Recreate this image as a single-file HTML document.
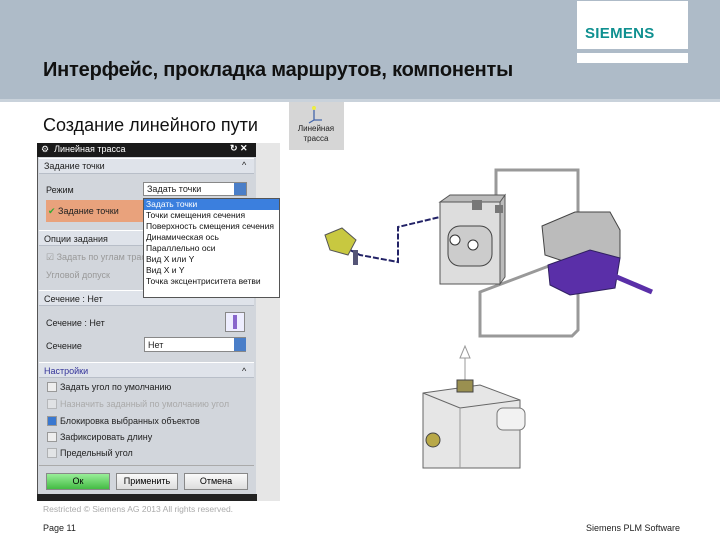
<!DOCTYPE html>
<html><head><meta charset="utf-8"><style>
*{margin:0;padding:0;box-sizing:border-box}
body{width:720px;height:540px;background:#fff;position:relative;overflow:hidden;font-family:"Liberation Sans","Noto Sans CJK SC",sans-serif}
.a{position:absolute}
.s{font-size:9px;color:#222;white-space:nowrap}
.sec{background:#dfe3ea;border-top:1px solid #fff;border-bottom:1px solid #b8bec8}
.cb{width:10px;height:10px;border:1px solid #999;background:#eee}
.btn{border:1px solid #888;background:linear-gradient(#fafafa,#ddd);font-size:9px;text-align:center;line-height:14px}
</style></head><body>
<div class="a" style="left:0;top:0;width:720px;height:99px;background:#aebbc8"></div>
<div class="a" style="left:0;top:99px;width:720px;height:3px;background:#c9d2db"></div>
<div class="a" style="left:577px;top:1px;width:111px;height:62px;background:#fff"></div>
<div class="a" style="left:577px;top:49px;width:111px;height:4px;background:#aebbc8"></div>
<div class="a" style="left:585px;top:25px;font-size:15px;font-weight:bold;color:#0f9090;letter-spacing:0.3px">SIEMENS</div>
<div class="a" style="left:43px;top:59px;font-size:20px;font-weight:bold;color:#111;letter-spacing:-0.2px">Интерфейс, прокладка маршрутов, компоненты</div>
<div class="a" style="left:43px;top:115px;font-size:18px;color:#111">Создание линейного пути</div>
<div class="a" style="left:289px;top:102px;width:55px;height:48px;background:#d6d6d6"></div>
<div class="a" style="left:292px;top:124px;font-size:8px;color:#222;text-align:center;width:48px;line-height:10px">Линейная трасса</div>
<svg class="a" style="left:305px;top:104px" width="20" height="20"><path d="M9 2v14h8M9 16l-5 3" stroke="#46a" stroke-width="1.3" fill="none"/><circle cx="9" cy="4" r="2" fill="#ee4"/></svg>

<!-- dialog -->
<div class="a" style="left:37px;top:143px;width:220px;height:358px;background:#d2d6dc;border:1px solid #555"></div>
<div class="a" style="left:37px;top:143px;width:220px;height:14px;background:#1a1a1a"></div>
<div class="a s" style="left:41px;top:144px;color:#fff">⚙ &nbsp;Линейная трасса</div>
<div class="a s" style="left:230px;top:143px;color:#fff;font-weight:bold">↻ ✕</div>
<div class="a" style="left:256px;top:143px;width:24px;height:358px;background:#e6e6e6"></div>
<div class="a sec" style="left:39px;top:158px;width:215px;height:16px"></div><div class="a s" style="left:44px;top:161px">Задание точки</div><div class="a s" style="left:242px;top:160px">^</div>
<div class="a s" style="left:46px;top:185px">Режим</div>
<div class="a" style="left:143px;top:182px;width:104px;height:14px;background:#fff;border:1px solid #888"></div><div class="a s" style="left:147px;top:184px">Задать точки</div>
<div class="a" style="left:234px;top:183px;width:12px;height:12px;background:#4a7ec8"></div>
<div class="a" style="left:46px;top:200px;width:100px;height:22px;background:#e9a27c"></div>
<div class="a s" style="left:48px;top:206px"><span style="color:#3a3">✔</span> Задание точки</div>
<div class="a sec" style="left:39px;top:230px;width:215px;height:16px"></div><div class="a s" style="left:44px;top:234px">Опции задания</div>
<div class="a s" style="left:46px;top:252px;color:#999">☑ Задать по углам трассы</div>
<div class="a s" style="left:46px;top:270px;color:#999">Угловой допуск</div>
<div class="a sec" style="left:39px;top:290px;width:215px;height:16px"></div><div class="a s" style="left:44px;top:294px">Сечение : Нет</div>
<div class="a s" style="left:46px;top:318px">Сечение : Нет</div>
<div class="a" style="left:225px;top:312px;width:20px;height:20px;background:#eef;border:1px solid #888"></div>
<div class="a" style="left:233px;top:315px;width:4px;height:14px;background:#86c"></div>
<div class="a s" style="left:46px;top:341px">Сечение</div>
<div class="a" style="left:144px;top:337px;width:102px;height:15px;background:#fff;border:1px solid #888"></div><div class="a s" style="left:148px;top:340px">Нет</div>
<div class="a" style="left:234px;top:338px;width:12px;height:13px;background:#4a7ec8"></div>
<div class="a sec" style="left:39px;top:362px;width:215px;height:16px"></div><div class="a s" style="left:44px;top:366px;color:#339">Настройки</div><div class="a s" style="left:242px;top:366px">^</div>
<div class="a cb" style="left:47px;top:382px"></div><div class="a s" style="left:60px;top:382px">Задать угол по умолчанию</div>
<div class="a cb" style="left:47px;top:399px;opacity:.5"></div><div class="a s" style="left:60px;top:399px;color:#aaa">Назначить заданный по умолчанию угол</div>
<div class="a cb" style="left:47px;top:416px;background:#3a78d0"></div><div class="a s" style="left:60px;top:416px">Блокировка выбранных объектов</div>
<div class="a cb" style="left:47px;top:432px"></div><div class="a s" style="left:60px;top:432px">Зафиксировать длину</div>
<div class="a cb" style="left:47px;top:448px;opacity:.6"></div><div class="a s" style="left:60px;top:448px">Предельный угол</div>
<div class="a" style="left:39px;top:465px;width:215px;height:1px;background:#aaa"></div>
<div class="a btn" style="left:46px;top:473px;width:64px;height:17px;background:linear-gradient(#9e9,#4b4);">Ок</div>
<div class="a btn" style="left:116px;top:473px;width:62px;height:17px">Применить</div>
<div class="a btn" style="left:184px;top:473px;width:64px;height:17px">Отмена</div>
<div class="a" style="left:37px;top:494px;width:220px;height:7px;background:#222"></div>
<!-- dropdown -->
<div class="a" style="left:143px;top:198px;width:137px;height:100px;background:#fff;border:1px solid #555"></div>
<div class="a" style="left:144px;top:199px;width:135px;height:11px;background:#3b7fde"></div>
<div class="a" style="left:146px;top:199px;font-size:8.5px;line-height:11px;color:#111">
<div style="color:#fff">Задать точки</div><div>Точки смещения сечения</div><div>Поверхность смещения сечения</div><div>Динамическая ось</div><div>Параллельно оси</div><div>Вид X или Y</div><div>Вид X и Y</div><div>Точка эксцентриситета ветви</div></div>

<!-- 3D art (absolute coords) -->
<svg class="a" style="left:0;top:0" width="720" height="540">
<path d="M496 205V170H578V330L572 336H480V292L570 258" stroke="#999" stroke-width="3" fill="none"/>
<path d="M336 243L360 255L398 262V227L440 217" stroke="#226" stroke-width="2" stroke-dasharray="6 2" fill="none"/>
<rect x="440" y="202" width="60" height="82" fill="#ddd" stroke="#555"/>
<path d="M440 202L450 195H505L500 202ZM500 202L505 195V277L500 284Z" fill="#bbb" stroke="#555"/>
<rect x="448" y="226" width="44" height="40" rx="12" fill="#ccc" stroke="#444"/>
<circle cx="455" cy="240" r="5" fill="#fff" stroke="#333"/><circle cx="473" cy="245" r="5" fill="#fff" stroke="#333"/>
<rect x="472" y="200" width="10" height="10" fill="#777"/><rect x="495" y="205" width="8" height="8" fill="#777"/>
<path d="M542 226L575 212H610L620 230V258L575 265L545 255Z" fill="#bbb" stroke="#444"/>
<path d="M548 265L590 250L620 258L615 288L570 295L550 285Z" fill="#5a2fa8" stroke="#302060"/>
<path d="M612 275L652 292" stroke="#5a2fa8" stroke-width="5"/>
<path d="M325 235L342 228L356 240L348 255L330 250Z" fill="#c8c840" stroke="#555"/>
<rect x="353" y="250" width="5" height="15" fill="#557"/>
<path d="M465 350V402" stroke="#999"/><path d="M460 358L465 346L470 358Z" fill="#fff" stroke="#999"/>
<path d="M423 393L480 385L520 400V468H423Z" fill="#e6e6e6" stroke="#666"/>
<path d="M423 393L460 408L520 400" stroke="#666" fill="none"/>
<path d="M460 408V468" stroke="#999"/>
<rect x="497" y="408" width="28" height="22" rx="6" fill="#f2f2f2" stroke="#777"/>
<path d="M457 380h16v12h-16z" fill="#9a9050" stroke="#444"/>
<circle cx="433" cy="440" r="7" fill="#b8a848" stroke="#444"/>
</svg>

<div class="a" style="left:43px;top:504px;font-size:8.5px;color:#aaa">Restricted © Siemens AG 2013 All rights reserved.</div>
<div class="a" style="left:43px;top:523px;font-size:9px;color:#222">Page 11</div>
<div class="a" style="left:586px;top:523px;font-size:9px;color:#222">Siemens PLM Software</div>
</body></html>
